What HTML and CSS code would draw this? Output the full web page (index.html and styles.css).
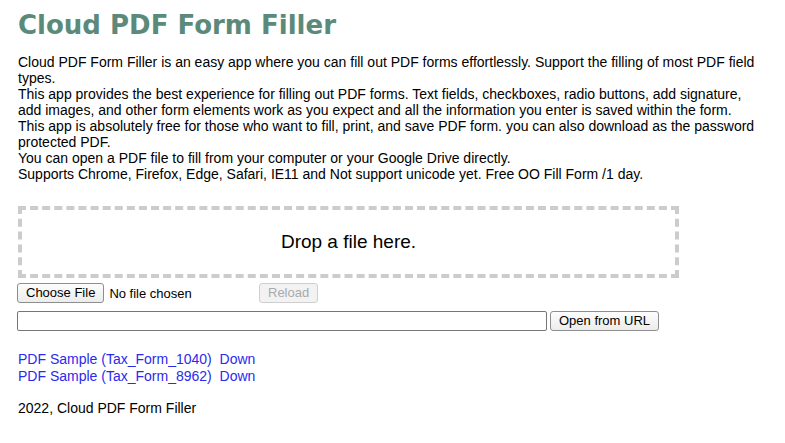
FILE: index.html
```
<!DOCTYPE html>
<html>
<head>
<meta charset="utf-8">
<title>Cloud PDF Form Filler</title>
<link rel="stylesheet" href="styles.css">
</head>
<body>
<div class="page">
  <h1 class="title">Cloud PDF Form Filler</h1>
  <p class="intro">Cloud PDF Form Filler is an easy app where you can fill out PDF forms effortlessly. Support the filling of most PDF field types.<br>
This app provides the best experience for filling out PDF forms. Text fields, checkboxes, radio buttons, add signature, add images, and other form elements work as you expect and all the information you enter is saved within the form.<br>
This app is absolutely free for those who want to fill, print, and save PDF form. you can also download as the password protected PDF.<br>
You can open a PDF file to fill from your computer or your Google Drive directly.<br>
Supports Chrome, Firefox, Edge, Safari, IE11 and Not support unicode yet. Free OO Fill Form /1 day.</p>
  <div class="dropzone">Drop a file here.</div>
  <div class="file-row">
    <div class="file-pick">
      <button class="btn">Choose File</button>
      <span class="file-name">No file chosen</span>
    </div>
    <button class="btn btn-disabled" disabled>Reload</button>
  </div>
  <div class="url-row">
    <input class="url-input" type="text">
    <button class="btn">Open from URL</button>
  </div>
  <div class="samples">
    <div><a href="#">PDF Sample (Tax_Form_1040)</a>&nbsp; <a href="#">Down</a></div>
    <div><a href="#">PDF Sample (Tax_Form_8962)</a>&nbsp; <a href="#">Down</a></div>
  </div>
  <p class="footer">2022, Cloud PDF Form Filler</p>
</div>
</body>
</html>
```
FILE: styles.css
```
html, body {
  margin: 0;
  padding: 0;
  background: #fff;
}
body {
  font-family: "Liberation Sans", Arial, sans-serif;
  font-size: 14px;
  color: #000;
}
.page {
  padding: 0 18px;
}
.title {
  font-family: "DejaVu Sans", Verdana, sans-serif;
  font-weight: bold;
  font-size: 26px;
  color: #5b8a7b;
  margin: 8px 0 0;
  line-height: 34px;
}
.intro {
  margin: 12px 0 0;
  line-height: 16px;
}
.dropzone {
  margin-top: 24px;
  width: 653px;
  height: 64px;
  border: 4px dashed #cccccc;
  display: flex;
  align-items: center;
  justify-content: center;
  font-size: 19px;
}
.file-row {
  display: flex;
  align-items: center;
  margin-top: 5px;
  margin-left: -1px;
}
.file-pick {
  display: flex;
  align-items: center;
  width: 242px;
}
.file-name {
  margin-left: 5px;
  font-size: 13px;
}
.btn {
  font-family: "Liberation Sans", Arial, sans-serif;
  font-size: 13px;
  height: 20px;
  padding: 0 8px;
  border: 1px solid #8e8e8e;
  border-radius: 3px;
  background: linear-gradient(#fdfdfd, #ececec);
  color: #000;
  line-height: 18px;
}
.btn-disabled {
  color: #aaa;
  border-color: #cfcfcf;
  background: #f2f2f2;
}
.url-row {
  display: flex;
  align-items: center;
  margin-top: 8px;
  margin-left: -1px;
  gap: 3px;
}
.url-input {
  width: 530px;
  height: 20px;
  box-sizing: border-box;
  border: 1px solid #767676;
  border-radius: 2px;
  padding: 0 3px;
  margin: 0;
}
.samples {
  margin-top: 20px;
  line-height: 17px;
}
.samples a {
  color: #2a2aee;
  text-decoration: none;
}
.footer {
  margin: 15px 0 0;
}
```
